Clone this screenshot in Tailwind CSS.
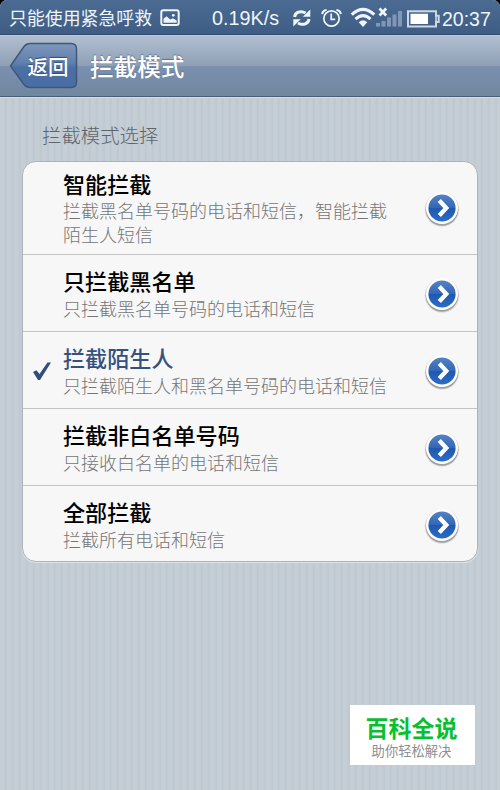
<!DOCTYPE html>
<html lang="zh-CN">
<head>
<meta charset="utf-8">
<title>拦截模式</title>
<script src="https://cdn.jsdelivr.net/npm/@tailwindcss/browser@4"></script>
</head>
<body class="bg-black">
<svg class="absolute h-0 w-0">
  <defs>
    <linearGradient id="blue" x1="0" y1="0" x2="0" y2="1"><stop offset="0" stop-color="#5483c6"/><stop offset=".48" stop-color="#3468b6"/><stop offset=".52" stop-color="#1f58b0"/><stop offset="1" stop-color="#2d6cc6"/></linearGradient>
    <linearGradient id="backfill" x1="0" y1="0" x2="0" y2="1"><stop offset="0" stop-color="#7f97bb"/><stop offset=".45" stop-color="#5f7fae"/><stop offset=".55" stop-color="#4b6fa5"/><stop offset="1" stop-color="#4a6ea3"/></linearGradient>
  </defs>
  <symbol id="go" viewBox="0 0 36 38">
    <circle cx="18" cy="19.500" r="17.300" fill="#000" opacity=".1"/>
    <circle cx="18" cy="19.300" r="16.400" fill="#000" opacity=".28"/>
    <circle cx="18" cy="18" r="16" fill="#fff"/>
    <circle cx="18" cy="18" r="13.600" fill="url(#blue)"/>
    <path d="M15.300 10.500 22.300 18l-7 7.500" fill="none" stroke="#fff" stroke-width="4.300"/>
  </symbol>
</svg>
<div class="flex h-[790px] w-[500px] flex-col overflow-hidden rounded-t-[7px] bg-[#c4ccd3] bg-[repeating-linear-gradient(90deg,#c6ced5_0px,#c6ced5_4px,#bfc9d1_5px,#bfc9d1_7px)] font-['Noto_Sans_CJK_SC',sans-serif]">
  <header>
    <div class="flex h-[35px] items-center border-b border-[#304c70] bg-linear-to-b from-[#4b6b93] to-[#3f5d84] pl-[9px] text-[18px] text-[#eef5fb]">
      <span class="w-[151px] shrink-0 text-[17.9px] leading-[35px]">只能使用紧急呼救</span>
      <svg class="mt-[2px] h-[18px] w-[20px] shrink-0" viewBox="0 0 20 18"><rect x="1.3" y="1.3" width="17.4" height="14.6" rx="2" fill="none" stroke="#eef5fb" stroke-width="2"/><path d="M3.5 13.8v-4l3-2.6 3.8 3.4 2.6-1.4 3.8 2.4v2.2z" fill="#eef5fb"/><circle cx="13.3" cy="6.3" r="1.4" fill="#eef5fb"/></svg>
      <span class="ml-[32px] mt-[3px] w-[80px] shrink-0 font-['Liberation_Sans',sans-serif] text-[19.800px]">0.19K/s</span>
      <svg class="mt-[2px] h-[20px] w-[20px] shrink-0" viewBox="0 0 20 20"><g fill="none" stroke="#eef5fb" stroke-width="3"><path d="M2.6 9C3 4.6 8.6 1.9 13.6 5.1"/><path d="M17 11c-.4 4.4-6 7.1-11 3.900"/></g><path d="M18.300 1.500v7.200h-7.500zM1.300 18.500v-7.200h7.500z" fill="#eef5fb"/></svg>
      <svg class="mt-[2px] ml-[9px] h-[20px] w-[21px] shrink-0" viewBox="0 0 21 20"><g fill="none" stroke="#eef5fb" stroke-width="1.700"><circle cx="10.500" cy="10.500" r="7.700"/><path d="M10.200 5.500v5.800h4"/><path d="M1.200 6.200C1.500 3.500 3.200 2.200 5.600 2M19.800 6.200C19.500 3.500 17.800 2.200 15.400 2" stroke-width="2"/></g></svg>
      <svg class="ml-[8px] h-[21px] w-[52px] shrink-0" viewBox="0 0 52 21"><g fill="none" stroke="#eef5fb" stroke-width="3.100"><path d="M1.700 7.600Q13-3 24.300 7.600"/><path d="M5.500 12.100Q13 5.300 20.500 12.100"/></g><path d="M8.700 15.300Q13 11.300 17.300 15.300L13 20z" fill="#eef5fb"/><path d="m29.500 1.500 6.700 7M36.200 1.500l-6.700 7" stroke="#eef5fb" stroke-width="2.700"/><path d="M26 16h4v3.500h-4zM31.500 14h4v5.500h-4zM37 10.500h4v9h-4zM42.500 7.500h4v12h-4zM48 4h4v15.500h-4z" fill="#8097b5"/></svg>
      <svg class="mt-[3px] ml-[5px] h-[18px] w-[33px] shrink-0" viewBox="0 0 33 18"><path d="M1 1.200h28v4.500h2.700v6.400H29v4.400H1z" fill="none" stroke="#cbd8e5" stroke-width="2"/><path d="M29 5v8" stroke="#cbd8e5" stroke-width="1.600"/><path d="M3.500 3.700H21v10.200H3.500z" fill="#fff"/></svg>
      <span class="ml-[2px] mt-[5px] font-['Liberation_Sans',sans-serif] text-[19.500px]">20:37</span>
    </div>
    <div class="flex h-[62px] items-center border-t border-b border-t-[#bcc8d8] border-b-[#4d5f77] bg-[linear-gradient(180deg,#b1bfd0_0%,#8fa0b6_49%,#7b90b0_51%,#70879f_100%)]">
      <button class="relative ml-[9px] h-[48px] w-[70px]">
        <svg class="absolute inset-0 h-[48px] w-[70px]" viewBox="0 0 70 48"><path d="M1.500 24 15 4.500Q17.500 1.500 21 1.500H62Q67.500 1.500 67.500 7V40Q67.500 45.500 62 45.500H21Q17.500 45.500 15 42.500Z" fill="url(#backfill)" stroke="#3f5879" stroke-width="1.500"/></svg>
        <span class="relative left-[4px] text-[20.500px] font-medium leading-[46px] text-white [text-shadow:0_-1px_1px_#344d70]">返回</span>
      </button>
      <h1 class="ml-[11px] text-[23.600px] font-medium leading-[58px] text-white [text-shadow:0_-1px_1px_#60738f]">拦截模式</h1>
    </div>
  </header>
  <main class="flex-1 border-t border-[#d5dce4] px-[22px]">
    <h2 class="h-[63px] pl-[20px] pt-[22px] text-[19.400px] font-light leading-[30px] text-[#5d646b]">拦截模式选择</h2>
    <ul class="h-[401px] w-[456px] overflow-hidden rounded-[14px] border border-[#aeb3b7] bg-[#f7f7f7] shadow-[0_1px_0_#dce2e6]">
      <li class="flex h-[93px] items-center border-b border-[#c4c4c4]">
        <div class="ml-[40px] w-[361px]"><h3 class="-mt-px mb-[2px] text-[22.100px] font-medium leading-[26px] text-black">智能拦截</h3><p class="w-[330px] text-[18px] font-light leading-[24px] text-[#757575]">拦截黑名单号码的电话和短信，智能拦截陌生人短信</p></div>
        <svg class="mt-[2px] h-[38px] w-[36px]"><use href="#go"/></svg>
      </li>
      <li class="flex h-[77px] items-center border-b border-[#c4c4c4]">
        <div class="ml-[40px] w-[361px]"><h3 class="text-[22.100px] font-medium leading-[28px] text-black">只拦截黑名单</h3><p class="pt-px text-[18px] font-light leading-[26px] text-[#757575]">只拦截黑名单号码的电话和短信</p></div>
        <svg class="mt-[4px] h-[38px] w-[36px]"><use href="#go"/></svg>
      </li>
      <li class="flex h-[77px] items-center border-b border-[#c4c4c4]">
        <svg class="ml-[9px] mt-[2px] h-[20px] w-[20px]" viewBox="0 0 20 20"><path d="M1 11 4.500 9.300 7.500 13 15.500 1.500H19L8 19H6z" fill="#2f4f7b"/></svg>
        <div class="ml-[11px] w-[361px]"><h3 class="text-[22.100px] font-medium leading-[28px] text-[#35527e]">拦截陌生人</h3><p class="pt-px text-[18px] font-light leading-[26px] text-[#757575]">只拦截陌生人和黑名单号码的电话和短信</p></div>
        <svg class="mt-[4px] h-[38px] w-[36px]"><use href="#go"/></svg>
      </li>
      <li class="flex h-[77px] items-center border-b border-[#c4c4c4]">
        <div class="ml-[40px] w-[361px]"><h3 class="text-[22.100px] font-medium leading-[28px] text-black">拦截非白名单号码</h3><p class="pt-px text-[18px] font-light leading-[26px] text-[#757575]">只接收白名单的电话和短信</p></div>
        <svg class="mt-[4px] h-[38px] w-[36px]"><use href="#go"/></svg>
      </li>
      <li class="flex h-[76px] items-center">
        <div class="ml-[40px] w-[361px]"><h3 class="text-[22.100px] font-medium leading-[28px] text-black">全部拦截</h3><p class="pt-px text-[18px] font-light leading-[26px] text-[#757575]">拦截所有电话和短信</p></div>
        <svg class="mt-[4px] h-[38px] w-[36px]"><use href="#go"/></svg>
      </li>
    </ul>
    <aside class="mt-[143px] ml-[328px] flex h-[60px] w-[125px] flex-col items-center bg-white pt-[9px] pr-[2px]">
      <strong class="text-[23px] font-bold leading-[27px] text-[#06c02f]">百科全说</strong>
      <span class="text-[13.300px] leading-[20px] text-[#8e8e8e]">助你轻松解决</span>
    </aside>
  </main>
</div>
</body>
</html>
